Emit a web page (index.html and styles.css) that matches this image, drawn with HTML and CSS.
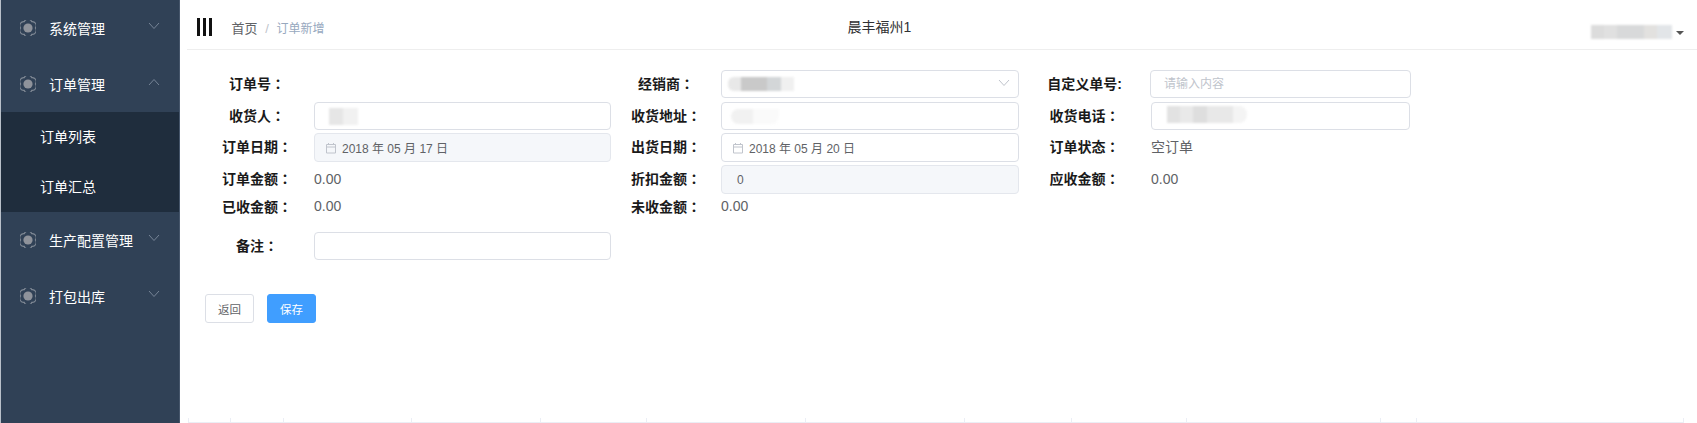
FILE: index.html
```html
<!DOCTYPE html>
<html lang="zh-CN">
<head>
    <meta charset="UTF-8">
    <meta name="viewport" content="width=device-width, initial-scale=1.0">
    <title>订单新增</title>
    <link rel="stylesheet" href="styles.css">
</head>
<body>

<svg class="defs" width="0" height="0">
    <symbol id="gear" viewBox="0 0 16 16">
        <path d="M15.4 8A4 4 0 0 1 11.7 14.4A4 4 0 0 1 4.3 14.4A4 4 0 0 1 .6 8A4 4 0 0 1 4.3 1.6A4 4 0 0 1 11.7 1.6A4 4 0 0 1 15.4 8Z" fill="none" stroke="#7f8894" stroke-width="1.2"/>
        <circle cx="8" cy="8" r="4.6" fill="#8f939b"/>
    </symbol>
    <symbol id="chevron" viewBox="0 0 12 8">
        <polyline points="1,1 6,6.5 11,1" fill="none" stroke="currentColor" stroke-width="1"/>
    </symbol>
</svg>

<aside class="sidebar">
    <div class="menu-item">
        <svg class="gear"><use href="#gear"/></svg>
        <span class="menu-title">系统管理</span>
        <svg class="chevron"><use href="#chevron"/></svg>
    </div>
    <div class="menu-item">
        <svg class="gear"><use href="#gear"/></svg>
        <span class="menu-title">订单管理</span>
        <svg class="chevron chevron-up"><use href="#chevron"/></svg>
    </div>
    <div class="submenu">
        <div class="submenu-item">订单列表</div>
        <div class="submenu-item">订单汇总</div>
    </div>
    <div class="menu-item">
        <svg class="gear"><use href="#gear"/></svg>
        <span class="menu-title">生产配置管理</span>
        <svg class="chevron"><use href="#chevron"/></svg>
    </div>
    <div class="menu-item">
        <svg class="gear"><use href="#gear"/></svg>
        <span class="menu-title">打包出库</span>
        <svg class="chevron"><use href="#chevron"/></svg>
    </div>
</aside>

<main class="main">
    <header class="navbar">
        <div class="hamburger"><i></i><i></i><i></i></div>
        <div class="breadcrumb">
            <span>首页</span>
            <span class="sep">/</span>
            <span class="current">订单新增</span>
        </div>
        <div class="shop-name">晨丰福州1</div>
        <div class="user">
            <span class="blur blur-user"></span>
            <span class="caret"></span>
        </div>
    </header>

    <!-- 表单 -->
    <form class="order-form">
        <label>订单号：</label>
        <div></div>
        <label>经销商：</label>
        <div class="field field-select">
            <span class="blur blur-dealer"></span>
            <svg class="chevron select-arrow"><use href="#chevron"/></svg>
        </div>
        <label>自定义单号:</label>
        <input class="field field-custom" type="text" placeholder="请输入内容">

        <label>收货人：</label>
        <div class="field"><span class="blur blur-name"></span></div>
        <label>收货地址：</label>
        <div class="field"><span class="blur blur-address"></span></div>
        <label>收货电话：</label>
        <div class="field field-phone"><span class="blur blur-phone"></span></div>

        <label>订单日期：</label>
        <div class="field field-date is-disabled">
            <svg class="calendar" viewBox="0 0 12 12"><path d="M1.5 2.5H10.5V11H1.5ZM1.5 5H10.5M3.5 1V3M8.5 1V3" fill="none" stroke="#c0c4cc"/></svg>
            2018 年 05 月 17 日
        </div>
        <label>出货日期：</label>
        <div class="field field-date">
            <svg class="calendar" viewBox="0 0 12 12"><path d="M1.5 2.5H10.5V11H1.5ZM1.5 5H10.5M3.5 1V3M8.5 1V3" fill="none" stroke="#c0c4cc"/></svg>
            2018 年 05 月 20 日
        </div>
        <label>订单状态：</label>
        <div class="value value-last">空订单</div>

        <label>订单金额：</label>
        <div class="value">0.00</div>
        <label>折扣金额：</label>
        <div class="field field-number is-disabled">0</div>
        <label>应收金额：</label>
        <div class="value value-last">0.00</div>

        <label class="label-top">已收金额：</label>
        <div class="value value-top">0.00</div>
        <label class="label-top">未收金额：</label>
        <div class="value value-top">0.00</div>
        <div></div>
        <div></div>

        <label>备注：</label>
        <div class="field"></div>
    </form>

    <div class="actions">
        <button class="btn" type="button">返回</button>
        <button class="btn btn-primary" type="button">保存</button>
    </div>

    <!-- 下面表格的表头，只露出一点 -->
    <div class="table-edge">
        <i style="width: 42px"></i>
        <i style="width: 53px"></i>
        <i style="width: 128px"></i>
        <i style="width: 129px"></i>
        <i style="width: 106px"></i>
        <i style="width: 159px"></i>
        <i style="width: 159px"></i>
        <i style="width: 107px"></i>
        <i style="width: 115px"></i>
        <i style="width: 194px"></i>
        <i style="width: 36px"></i>
        <i style="width: 267px"></i>
    </div>
</main>

</body>
</html>
```

FILE: styles.css
```css
/* 基础 */
html, body {
    height: 100%;
}

body {
    margin: 0;
    display: flex;
    overflow: hidden;
    background-color: #fff;
    color: #606266;
    font-family: "Liberation Sans", "Noto Sans CJK SC", sans-serif;
    font-size: 14px;
}

.defs {
    position: absolute;
}

/* 侧边栏 */
.sidebar {
    width: 180px;
    flex-shrink: 0;
    box-sizing: border-box;
    border-left: 1px solid #b9c0c9;
    border-right: 1px solid #46566b;
    background-color: #304156;
    color: #fff;
}

.menu-item {
    height: 56px;
    display: flex;
    align-items: center;
    padding-left: 19px;
}

.gear {
    width: 16px;
    height: 16px;
    flex-shrink: 0;
}

.menu-title {
    margin-left: 13px;
    width: 84px;
    white-space: nowrap;
}

.chevron {
    width: 12px;
    height: 8px;
    margin-left: 15px;
    margin-top: -5px;
    color: #768496;
}

.chevron-up {
    transform: rotate(180deg);
}

.submenu {
    background-color: #1f2d3d;
}

.submenu-item {
    height: 50px;
    line-height: 50px;
    padding-left: 39px;
}

/* 右侧 */
.main {
    flex: 1;
    min-width: 0;
    display: flex;
    flex-direction: column;
}

.navbar {
    height: 49px;
    margin-left: 7px;
    display: flex;
    align-items: center;
    border-bottom: 1px solid #eeeeee;
}

.hamburger {
    display: flex;
    gap: 3.5px;
    margin-left: 10px;
    margin-top: 5px;
}

.hamburger i {
    width: 2.5px;
    height: 18px;
    background-color: #111;
}

.breadcrumb {
    margin-left: 20px;
    padding-top: 5px;
    font-size: 13px;
    white-space: nowrap;
}

.breadcrumb .sep {
    margin: 0 4px;
    color: #c0c4cc;
}

.breadcrumb .current {
    color: #97a8be;
    font-size: 12px;
}

.shop-name {
    margin-left: 523px;
    padding-top: 2px;
    color: #303133;
}

.user {
    margin-left: auto;
    margin-right: 13px;
    display: flex;
    align-items: center;
    gap: 4px;
    padding-top: 15px;
}

.caret {
    border-left: 4px solid transparent;
    border-right: 4px solid transparent;
    border-top: 4px solid #555;
    margin-top: 2px;
}

/* 打码块 */
.blur {
    display: block;
    filter: blur(0.8px);
}

.blur-user {
    width: 81px;
    height: 14px;
    background: linear-gradient(90deg, #dcdcdc 0 13px, #e0e0e0 13px 26px, #d8d9da 26px 53px, #e2e1df 53px 66px, #e2e5e8 66px);
}

.blur-dealer {
    width: 66px;
    height: 14px;
    border-radius: 6px 0 0 6px;
    background: linear-gradient(90deg, #e8e8e8 0 13px, #c9c9c9 13px 39px, #d3d6d8 39px 53px, #f0f0f0 53px);
}

.blur-name {
    width: 29px;
    height: 17px;
    margin-left: -1px;
    background: linear-gradient(90deg, #e6e6e6 0 14px, #f1f1f1 14px);
}

.blur-address {
    width: 48px;
    height: 15px;
    margin-left: -6px;
    border-radius: 8px 0 8px 8px;
    background: linear-gradient(90deg, #f1f1f1 0 22px, #fafafa 22px);
}

.blur-phone {
    width: 80px;
    height: 17px;
    margin-top: -3px;
    border-radius: 0 8px 8px 0;
    background: linear-gradient(90deg, #e2e2e2 0 13px, #e9e9e9 13px 26px, #dedede 26px 40px, #e8e8e8 40px 66px, #f4f4f4 66px);
}

/* 表单 */
.order-form {
    display: grid;
    grid-template-columns: 114px 297px 110px 298px 131px 261px;
    grid-template-rows: 32px 31px 32px 29px 38px 28px;
    margin: 20px 0 0 20px;
}

.order-form label {
    height: 28px;
    line-height: 29px;
    text-align: center;
    color: #1a1a1a;
    font-family: "Liberation Sans", "Noto Sans CJK TC", sans-serif;
    font-feature-settings: "locl" 0; /* 冒号居中 */
    font-weight: 700;
    white-space: nowrap;
}

.order-form .label-top {
    height: 24px;
    line-height: 26px;
}

.field {
    box-sizing: border-box;
    width: 100%;
    height: 28px;
    display: flex;
    align-items: center;
    padding: 0 15px;
    border: 1px solid #dcdfe6;
    border-radius: 4px;
    background-color: #fff;
    font-family: inherit;
    font-size: 12px;
    color: #606266;
    outline: none;
}

.field::placeholder {
    color: #c0c4cc;
}

.field-custom {
    padding-left: 13px;
}

.field-select {
    justify-content: space-between;
    padding: 0 8px 0 6px;
}

.select-arrow {
    margin-top: -3px;
    color: #c0c4cc;
}

.field-date {
    height: 29px;
    padding-left: 10px;
    gap: 5px;
}

.field-number {
    height: 29px;
}

.field-phone {
    width: 259px;
    margin-left: 1px;
}

.is-disabled {
    background-color: #f5f7fa;
    border-color: #e4e7ed;
}

.calendar {
    width: 12px;
    height: 12px;
}

.value {
    height: 28px;
    line-height: 28px;
}

.value-top {
    height: 24px;
    line-height: 24px;
}

.value-last {
    margin-left: 1px;
}

/* 按钮 */
.actions {
    display: flex;
    gap: 13px;
    margin: 34px 0 0 25px;
}

.btn {
    width: 49px;
    height: 29px;
    padding: 0;
    border: 1px solid #dcdfe6;
    border-radius: 3px;
    background-color: #fff;
    color: #606266;
    font-family: inherit;
    font-size: 11.5px;
}

.btn-primary {
    background-color: #409eff;
    border-color: #409eff;
    color: #fff;
}

/* 表格边缘 */
.table-edge {
    margin-top: auto;
    margin-left: 8px;
    display: flex;
    height: 5px;
    margin-bottom: 0;
    width: fit-content;
    box-sizing: border-box;
    border-bottom: 1px solid #ebeef5;
    border-right: 1px solid #ebeef5;
}

.table-edge i {
    box-sizing: border-box;
    border-left: 1px solid #ebeef5;
}
```
